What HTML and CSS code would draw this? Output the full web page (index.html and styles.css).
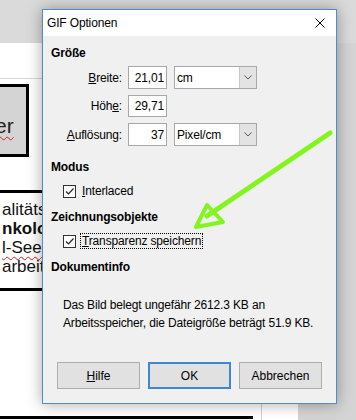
FILE: index.html
```html
<!DOCTYPE html>
<html lang="de">
<head>
    <meta charset="UTF-8">
    <meta name="viewport" content="width=device-width, initial-scale=1.0">
    <title>GIF Optionen</title>
    <link rel="stylesheet" href="styles.css">
</head>
<body>

    <!-- document behind the dialog -->
    <div class="desk">
        <div class="toolbar"></div>
        <div class="workspace">
            <div class="page">
                <div class="page-col">
                    <div class="ruler"></div>
                    <div class="doc-box"><span class="spell">er</span></div>
                    <div class="rule"></div>
                    <div class="doc-text">
                        <p class="doc-line">alitäts</p>
                        <p class="doc-line bold">nkolo</p>
                        <p class="doc-line"><span class="spell">l-Seels</span></p>
                        <p class="doc-line">arbeit</p>
                    </div>
                    <div class="rule"></div>
                    <div class="rule rule-bottom"></div>
                </div>
            </div>
        </div>
    </div>

    <div class="dialog">
        <div class="titlebar">
            <span class="title">GIF Optionen</span>
            <svg class="close" width="10" height="10" viewBox="0 0 10 10">
                <path d="M0.5 0.5 L9.5 9.5 M9.5 0.5 L0.5 9.5" stroke="#000" stroke-width="1" fill="none"/>
            </svg>
        </div>

        <div class="content">
            <h3 class="section">Größe</h3>
            <div class="size-grid">
                <label class="field-label"><u>B</u>reite:</label>
                <div class="num-box">21,01</div>
                <div class="select-box">
                    <span>cm</span>
                    <span class="drop">
                        <svg width="8" height="5" viewBox="0 0 8 5"><path d="M0.5 0.5 L4 4 L7.5 0.5" stroke="#555" fill="none"/></svg>
                    </span>
                </div>

                <label class="field-label">Höh<u>e</u>:</label>
                <div class="num-box">29,71</div>
                <div></div>

                <label class="field-label"><u>A</u>uflösung:</label>
                <div class="num-box">37</div>
                <div class="select-box">
                    <span>Pixel/cm</span>
                    <span class="drop">
                        <svg width="8" height="5" viewBox="0 0 8 5"><path d="M0.5 0.5 L4 4 L7.5 0.5" stroke="#555" fill="none"/></svg>
                    </span>
                </div>
            </div>

            <h3 class="section modus">Modus</h3>
            <div class="check-row">
                <span class="checkbox">
                    <svg width="11" height="11" viewBox="0 0 11 11"><path d="M2 5.5 L4.5 8 L9.5 2.5" stroke="#222" stroke-width="1.2" fill="none"/></svg>
                </span>
                <span class="check-label"><u>I</u>nterlaced</span>
            </div>

            <h3 class="section spaced">Zeichnungsobjekte</h3>
            <div class="check-row">
                <span class="checkbox">
                    <svg width="11" height="11" viewBox="0 0 11 11"><path d="M2 5.5 L4.5 8 L9.5 2.5" stroke="#222" stroke-width="1.2" fill="none"/></svg>
                </span>
                <span class="check-label focused"><u>T</u>ransparenz speichern</span>
            </div>

            <h3 class="section spaced">Dokumentinfo</h3>
            <p class="info">Das Bild belegt ungefähr 2612.3 KB an<br>Arbeitsspeicher, die Dateigröße beträgt 51.9 KB.</p>

            <div class="buttons">
                <button class="btn"><u>H</u>ilfe</button>
                <button class="btn default">OK</button>
                <button class="btn">Abbrechen</button>
            </div>
        </div>
    </div>

    <!-- green annotation arrow -->
    <svg class="arrow" width="356" height="420" viewBox="0 0 356 420">
        <path d="M330 133 L207 216" stroke="#82f51c" stroke-width="5" stroke-linecap="round" fill="none"/>
        <polygon points="196,227 207,205 223,222" stroke="#82f51c" stroke-width="4" stroke-linejoin="round" fill="none"/>
    </svg>

</body>
</html>
```

FILE: styles.css
```css
body {
    margin: 0;
    width: 356px;
    height: 420px;
    position: relative;
    overflow: hidden;
    background-color: #d8d8d8;
    font-family: "Liberation Sans", Arial, sans-serif;
}

/* background document */
.desk {
    display: flex;
    flex-direction: column;
    height: 420px;
}
.toolbar {
    height: 43px;
    background-color: #dadada;
}
.workspace {
    flex: 1;
    display: flex;
    background-color: #d4d4d4;
}
.page {
    width: 298px;
    background: #fff;
    display: flex;
}
.page-col {
    width: 261px;
    border-right: 1px solid #cfcfcf;
    overflow: hidden;
}
.ruler {
    height: 35px;
    border-bottom: 1px solid #d6d6d6;
}
.doc-box {
    margin: 5px 0 0 -10px;
    width: 39px;
    height: 73px;
    box-sizing: border-box;
    border: 3px solid #000;
    background-color: #d4d4d4;
    padding: 28px 0 0 2px;
    font-size: 21px;
    line-height: 22px;
    color: #222;
}
.spell {
    text-decoration: underline wavy #d02020;
    text-decoration-thickness: 1px;
    text-underline-offset: 3px;
}
.rule {
    height: 3px;
    background: #000;
    margin-top: 33px;
}
.doc-text {
    margin-top: 7px;
}
.doc-text + .rule {
    margin-top: 12px;
}
.rule.rule-bottom {
    width: 253px;
    margin-top: 125px;
}
.doc-line {
    margin: 0;
    padding-left: 2px;
    font-size: 17px;
    line-height: 19px;
    white-space: nowrap;
    color: #111;
}
.doc-line.bold {
    font-weight: bold;
}

/* dialog window */
.dialog {
    position: absolute;
    left: 42px;
    top: 9px;
    width: 295px;
    height: 395px;
    box-sizing: border-box;
    border: 1px solid #4f8cca;
    background-color: #f0f0f0;
    box-shadow: 0 0 14px rgba(0, 0, 0, 0.35);
    display: flex;
    flex-direction: column;
    font-size: 12px;
    letter-spacing: -0.15px;
    color: #000;
}
.titlebar {
    height: 26px;
    background: #fff;
    display: flex;
    align-items: center;
    justify-content: space-between;
    padding-left: 4px;
}
.close {
    margin-right: 11px;
}
.content {
    flex: 1;
    display: flex;
    flex-direction: column;
    padding: 9px 8px 14px 8px;
}
.section {
    margin: 0;
    font-size: 12px;
    line-height: 16px;
    font-weight: bold;
}
.section.modus {
    margin-top: 13px;
}
.section.spaced {
    margin-top: 9px;
}
.size-grid {
    display: grid;
    grid-template-columns: 71px 39px 84px;
    grid-template-rows: 23px 22px 23px;
    column-gap: 6px;
    row-gap: 6px;
    margin-top: 5px;
}
.field-label {
    align-self: center;
    text-align: right;
    line-height: 16px;
}
.num-box {
    background: #fff;
    border: 1px solid #a8a8a8;
    padding-right: 2px;
    display: flex;
    align-items: center;
    justify-content: flex-end;
}
.select-box {
    margin-left: 1px;
    background: #fff;
    border: 1px solid #a8a8a8;
    display: flex;
    align-items: center;
    justify-content: space-between;
    padding-left: 2px;
}
.drop {
    width: 16px;
    align-self: stretch;
    background-color: #e3e3e3;
    border-left: 1px solid #c6c6c6;
    display: flex;
    align-items: center;
    justify-content: center;
}
.check-row {
    display: flex;
    align-items: center;
    height: 18px;
    margin-top: 7px;
    padding-left: 12px;
}
.checkbox {
    width: 13px;
    height: 13px;
    box-sizing: border-box;
    border: 1px solid #333;
    background: #fff;
    display: flex;
    align-items: center;
    justify-content: center;
}
.check-label {
    margin-left: 4px;
    line-height: 14px;
    padding: 0 1px;
    border: 1px solid transparent;
}
.check-label.focused {
    border: 1px dotted #000;
}
.info {
    margin: 21px 0 0 12px;
    line-height: 18px;
}
.buttons {
    margin-top: auto;
    margin-left: 6px;
    display: flex;
    gap: 8px;
}
.btn {
    width: 83px;
    height: 27px;
    font-family: "Liberation Sans", Arial, sans-serif;
    font-size: 12px;
    color: #000;
    background-color: #e1e1e1;
    border: 1px solid #adadad;
    padding: 0;
}
.btn.default {
    border: 2px solid #3c89d2;
}

.arrow {
    position: absolute;
    left: 0;
    top: 0;
    pointer-events: none;
}
```
